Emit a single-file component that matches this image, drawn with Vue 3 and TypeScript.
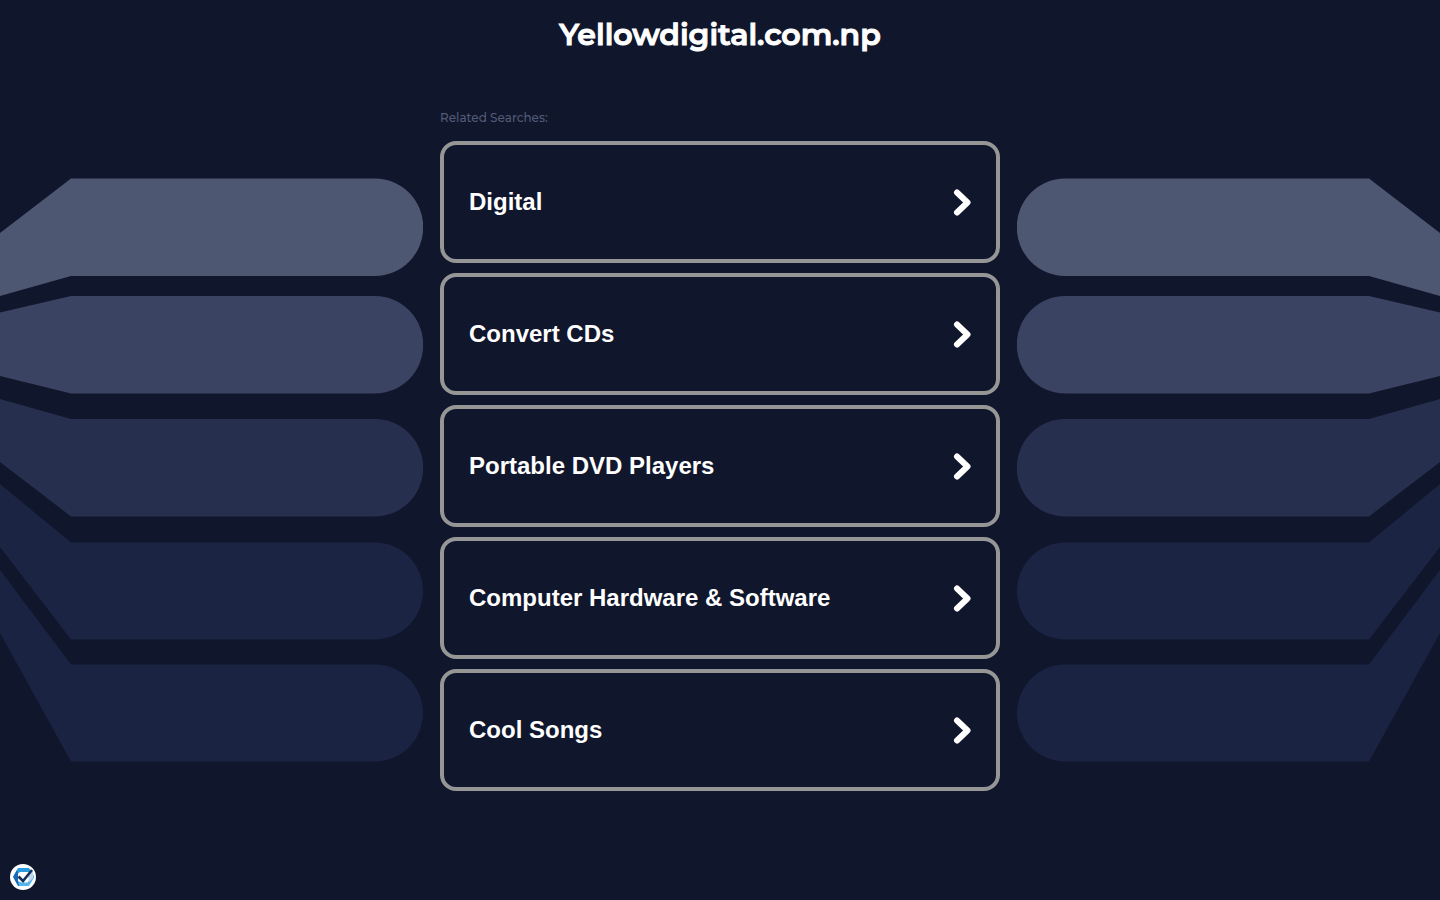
<script setup lang="ts">
interface Band {
  fill: string
  path: string
}

const searches: string[] = [
  'Digital',
  'Convert CDs',
  'Portable DVD Players',
  'Computer Hardware & Software',
  'Cool Songs',
]

const bands: Band[] = [
  { fill: '#4e5772', path: 'M0 55 71 .5H375a48 48.5 0 0 1 0 97.5H71L0 118Z' },
  { fill: '#3b4362', path: 'M0 134.5 71 118H375a48 48.5 0 0 1 0 97.5H71L0 198Z' },
  { fill: '#262f4e', path: 'M0 221 71 241H375a48 48.5 0 0 1 0 97.5H71L0 284Z' },
  { fill: '#1b2443', path: 'M0 306 71 364.5H375a48 48.5 0 0 1 0 97H71L0 369Z' },
  { fill: '#1a2342', path: 'M0 392 71 486.5H375a48 48.5 0 0 1 0 97H71L0 455Z' },
]
</script>

<template>
  <div class="page">
    <header class="header">
      <h1 class="title">Yellowdigital.com.np</h1>
    </header>

    <main class="content">
      <svg class="art" viewBox="0 0 423 584" aria-hidden="true">
        <path v-for="band in bands" :key="band.path" :d="band.path" :fill="band.fill" />
      </svg>

      <section class="searches" aria-labelledby="related">
        <h2 id="related" class="label">Related Searches:</h2>
        <ul class="list">
          <li v-for="item in searches" :key="item">
            <a class="card" href="#">
              <span>{{ item }}</span>
              <svg class="chevron" viewBox="0 0 18 28" aria-hidden="true">
                <path d="M4 4.500 14.500 14.500 4 24.500" />
              </svg>
            </a>
          </li>
        </ul>
      </section>

      <svg class="art art-right" viewBox="0 0 423 584" aria-hidden="true">
        <path v-for="band in bands" :key="band.path" :d="band.path" :fill="band.fill" />
      </svg>
    </main>

    <button class="badge" type="button" aria-label="Privacy settings">
      <svg viewBox="0 0 26 26" aria-hidden="true">
        <circle cx="13" cy="13" r="13" fill="#fff" />
        <path d="M8 4h11l2.500 4H10L7.500 10 3 13Z" fill="#2b9be0" />
        <path d="M3 13l4-7 1 4v7l4 5H8Z" fill="#1769b3" />
        <path d="M8 17l3.500 1.500h6l3-4 3-4 .5 3-5 8.500H9Z" fill="#55b5ea" />
        <path d="M18 9l5-2v7l-4 4Z" fill="#c3d5ef" />
        <path d="M8.500 12.500 13 17 22 6" fill="none" stroke="#12325a" stroke-width="2.600" />
      </svg>
    </button>
  </div>
</template>

<style>
body {
  margin: 0;
  background: #10162b;
}
</style>

<style scoped>
.page {
  min-height: 100vh;
  box-sizing: border-box;
  overflow: hidden;
  background: #10162b;
  color: #fff;
  font-family: "Liberation Sans", Arial, sans-serif;
}

.header {
  padding: 16px;
  text-align: center;
}

.title {
  margin: 0;
  font: 600 30px/38px Montserrat, Inter, sans-serif;
  -webkit-text-stroke: 1px #fff;
}

.content {
  display: grid;
  grid-template-columns: minmax(0, 1fr) minmax(0, 560px) minmax(0, 1fr);
  column-gap: 17px;
  padding-top: 40px;
}

.art {
  width: 423px;
  height: 584px;
  margin-top: 68px;
  justify-self: end;
}

.art-right {
  justify-self: start;
  transform: scaleX(-1);
}

.label {
  margin: 0 0 15px;
  color: #525b78;
  font: 500 12px/16px Montserrat, Inter, sans-serif;
}

.list {
  display: grid;
  gap: 10px;
  margin: 0;
  padding: 0;
  list-style: none;
}

.card {
  display: flex;
  align-items: center;
  justify-content: space-between;
  box-sizing: border-box;
  min-height: 122px;
  padding: 25px;
  border: 4px solid #969696;
  border-radius: 16px;
  color: #fff;
  font-size: 24px;
  font-weight: 700;
  line-height: 28px;
  text-decoration: none;
}

.chevron {
  width: 18px;
  height: 28px;
  flex: none;
}

.chevron path {
  fill: none;
  stroke: #fff;
  stroke-width: 6;
  stroke-linecap: round;
  stroke-linejoin: round;
}

.badge {
  position: fixed;
  left: 10px;
  bottom: 10px;
  width: 26px;
  height: 26px;
  padding: 0;
  border: 0;
  border-radius: 50%;
  background: none;
  cursor: pointer;
}

.badge svg {
  display: block;
}
</style>
